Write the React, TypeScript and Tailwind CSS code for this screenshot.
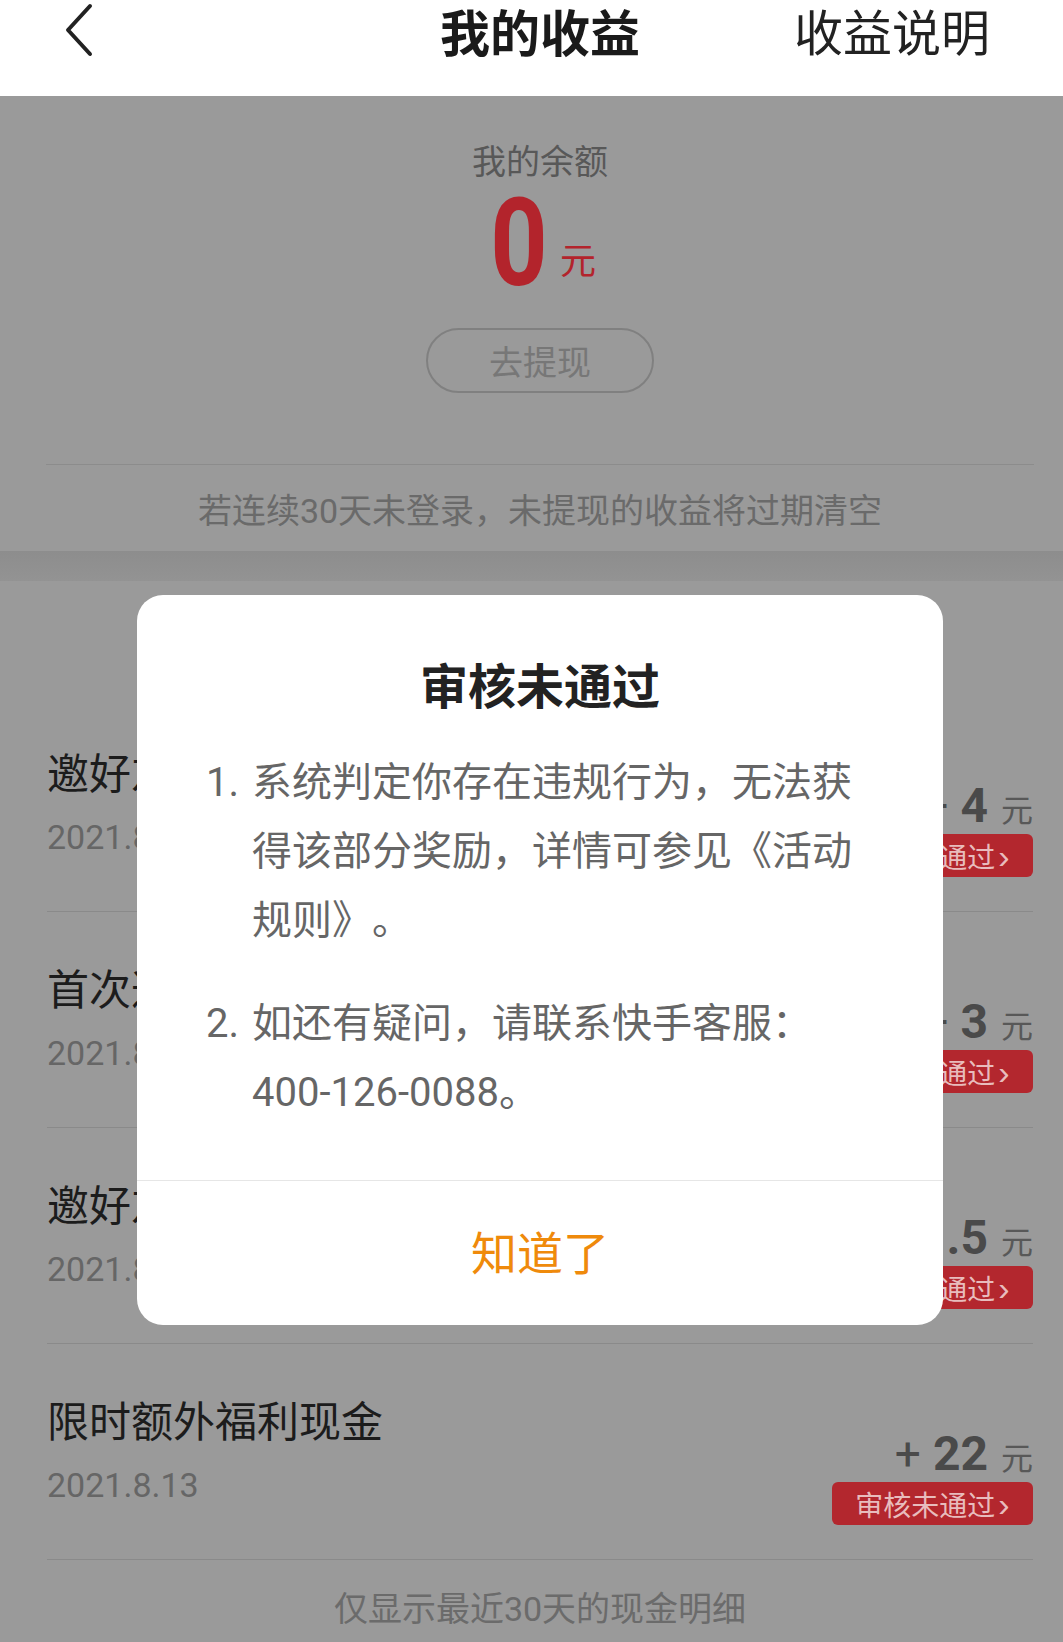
import React from "react";

const rows = [
  { title: "邀好友得现金", date: "2021.8.13", amount: "4" },
  { title: "首次邀请好友", date: "2021.8.13", amount: "3" },
  { title: "邀好友得现金", date: "2021.8.13", amount: "1.5" },
  { title: "限时额外福利现金", date: "2021.8.13", amount: "22" },
];

function Row({ title, date, amount }: { title: string; date: string; amount: string }) {
  return (
    <div className="flex h-[216px] justify-between border-b border-[#8a8a8a]">
      <div className="pt-[54px]">
        <div className="text-[42px] leading-none text-[#1c1c1c]">{title}</div>
        <div className="mt-[28px] font-['Roboto','Noto_Sans_CJK_SC',sans-serif] text-[34px] leading-none text-[#666666]">
          {date}
        </div>
      </div>
      <div className="flex flex-col items-end pt-[86px]">
        <div className="flex items-baseline text-[#4a4a4a]">
          <span className="font-['Roboto',sans-serif] text-[46px] leading-none">+</span>
          <span className="ml-[12px] font-['Roboto',sans-serif] text-[48px] font-bold leading-none">{amount}</span>
          <span className="ml-[13px] text-[32px] leading-none text-[#585858]">元</span>
        </div>
        <div className="mt-[4px] flex h-[43px] w-[201px] items-center justify-center rounded-[6px] bg-[#b3272e] text-[28px] leading-none text-[#e8bcbd]">
          <span>审核未通过</span>
          <span className="ml-[3px] font-['Liberation_Sans',sans-serif] text-[34px] leading-none">›</span>
        </div>
      </div>
    </div>
  );
}

export default function App() {
  return (
    <div className="min-h-[1642px] w-full overflow-hidden bg-[#9a9a9a] font-['Noto_Sans_CJK_SC',sans-serif]">
      <div className="relative w-[1080px]">
        {/* Header */}
        <header className="flex h-[96px] items-start bg-white pl-[64px] pr-[90px]">
          <svg width="32" height="58" viewBox="0 0 32 58" className="shrink-0">
            <polyline
              points="26,6 4,30 26,54"
              fill="none"
              stroke="#222222"
              strokeWidth="4"
              strokeLinecap="round"
              strokeLinejoin="round"
            />
          </svg>
          <h1 className="ml-[344px] mt-[5px] text-[50px] font-bold leading-none text-[#1a1a1a]">我的收益</h1>
          <span className="ml-auto mt-[5px] text-[49px] leading-none text-[#222222]">收益说明</span>
        </header>

        {/* Balance section */}
        <section className="flex flex-col items-center pt-[47px] pb-[23px]">
          <div className="text-[34px] leading-none text-[#585858]">我的余额</div>
          <div className="mt-[6px] flex items-baseline text-[#b3242c]">
            <span className="inline-block scale-x-[0.82] font-['Roboto',sans-serif] text-[122px] font-bold leading-none">0</span>
            <span className="relative -top-[11px] ml-[6px] text-[36px] leading-none">元</span>
          </div>
          <button className="mt-[23px] h-[65px] w-[228px] rounded-full border-2 border-[#808080] text-[34px] leading-none text-[#777777]">
            去提现
          </button>
          <div className="mt-[71px] h-px w-[988px] bg-[#8c8c8c]" />
          <p className="mt-[29px] font-['Roboto','Noto_Sans_CJK_SC',sans-serif] text-[34px] leading-none text-[#6a6a6a]">
            若连续30天未登录，未提现的收益将过期清空
          </p>
        </section>

        <div className="h-[30px] bg-gradient-to-b from-[#8d8d8d] to-[#939393]" />

        {/* List */}
        <div className="px-[47px] pt-[115px]">
          {rows.map((r, i) => (
            <Row key={i} {...r} />
          ))}
        </div>

        <p className="pt-[32px] text-center font-['Roboto','Noto_Sans_CJK_SC',sans-serif] text-[34px] leading-none text-[#6b6b6b]">
          仅显示最近30天的现金明细
        </p>

        {/* Modal */}
        <div className="absolute inset-x-0 top-[595px] flex justify-center">
          <div className="w-[806px] overflow-hidden rounded-[26px] bg-white">
            <div className="px-[69px] pt-[64px] pb-[53px]">
              <h2 className="text-center text-[48px] font-bold leading-none text-[#222222]">审核未通过</h2>
              <ol className="mt-[41px] font-['Roboto','Noto_Sans_CJK_SC',sans-serif] text-[40px] leading-[69px] text-[#666666] [text-spacing-trim:space-all]">
                <li className="flex">
                  <span className="w-[46px] shrink-0">1.</span>
                  <span>
                    系统判定你存在违规行为，无法获
                    <br />
                    得该部分奖励，详情可参见《活动
                    <br />
                    规则》。
                  </span>
                </li>
                <li className="mt-[34px] flex">
                  <span className="w-[46px] shrink-0">2.</span>
                  <span>
                    如还有疑问，请联系快手客服：
                    <br />
                    400-126-0088。
                  </span>
                </li>
              </ol>
            </div>
            <div className="h-px bg-[#e6e6e6]" />
            <div className="flex h-[144px] items-center justify-center pb-[6px] text-[46px] leading-none text-[#ef8a0b]">
              知道了
            </div>
          </div>
        </div>
      </div>
    </div>
  );
}
